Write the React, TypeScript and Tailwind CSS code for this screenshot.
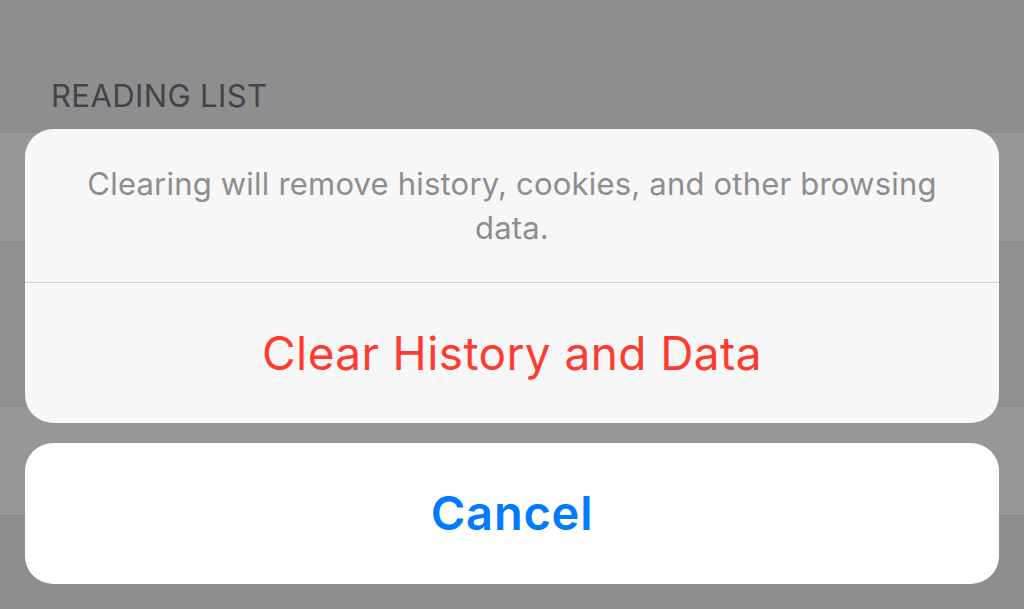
import React from 'react';

const font = { fontFamily: 'Inter, "Noto Sans", sans-serif' };

export default function App() {
  return (
    <div className="relative w-[1024px] h-[609px] overflow-hidden bg-[#8e8e90]" style={font}>
      {/* dimmed settings list underneath */}
      <div className="flex flex-col">
        <div className="h-[132px] flex items-end pl-[51px] pb-[21px]">
          <span className="text-[31px] leading-none tracking-[0.4px] text-[#434345]">READING LIST</span>
        </div>
        <div className="h-[110px] bg-[#979797] border-t border-[#8a8a8c]" />
        <div className="h-[163px] bg-[#8f8f91] border-t border-[#858587]" />
        <div className="h-[110px] bg-[#979797] border-t border-[#858587]" />
        <div className="flex-1 bg-[#8e8e90] border-t border-[#858587]" />
      </div>

      {/* action sheet */}
      <div className="absolute left-[25px] right-[25px] top-[129px] flex flex-col gap-[20px]">
        <div className="rounded-[28px] bg-[#f7f7f7] overflow-hidden flex flex-col">
          <div className="h-[154px] flex items-center justify-center px-[56px] border-b border-[#d2d2d4]">
            <p className="text-center text-[31px] leading-[44px] tracking-[0.2px] text-[#8e8e8e]">
              Clearing will remove history, cookies, and other browsing data.
            </p>
          </div>
          <button className="h-[140px] flex items-center justify-center text-[46px] tracking-[0.4px] text-[#ff3b30]">
            Clear History and Data
          </button>
        </div>
        <button className="h-[141px] rounded-[28px] bg-white flex items-center justify-center text-[47px] tracking-[0.8px] font-semibold text-[#007aff]">
          Cancel
        </button>
      </div>
    </div>
  );
}
